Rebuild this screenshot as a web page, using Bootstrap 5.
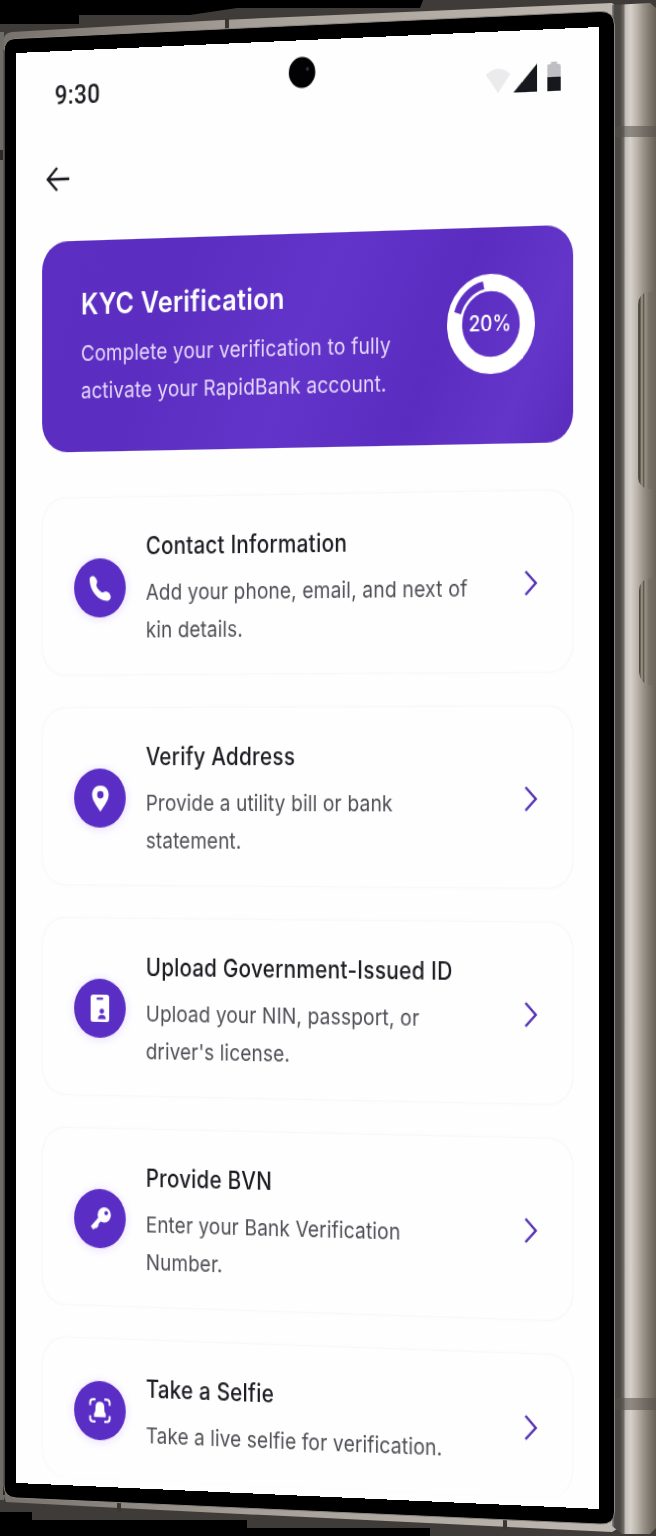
<!DOCTYPE html>
<html lang="en">
<head>
<meta charset="utf-8">
<meta name="viewport" content="width=device-width, initial-scale=1">
<title>KYC Verification</title>
<link href="https://cdn.jsdelivr.net/npm/bootstrap@5.3.0/dist/css/bootstrap.min.css" rel="stylesheet">
<style>
  :root { --brand: #5a2dc4; }
  body { background: #000; font-family: Inter, "Liberation Sans", sans-serif; }
  .stage { width: 656px; height: 1536px; }
  .phone-body { position: absolute; inset: 0; }
  /* the screen plane, turned slightly away from the viewer */
  .screen {
    width: 583px; height: 1265px; background: #fefefe; color: #1d1c22;
    position: absolute; left: 0; top: 0; transform-origin: 0 0;
    transform: matrix3d(.96393,-.04622,0,-.0000602, 0,1.1304,0,0, 0,0,1,0, 16,53,0,1);
  }
  .screen svg { display: block; flex: none; }
  .status-row { padding: 26px 37px 0 40px; height: 56px; }
  .clock { font: 500 23px/28px Roboto, sans-serif; letter-spacing: .4px; }
  .status-icons { margin-top: 2px; }
  .camera { position: absolute; left: 278px; top: 13.5px; width: 26.500px; height: 28px; }
  .app-row { height: 112px; padding: 46px 0 0 31px; }
  .hero {
    margin: 0 25px 0 27px; height: 186.4px; padding: 39px 37px 0 40px; border-radius: 26px; color: #fff;
    background: linear-gradient(115deg, #5c2fc2 0%, #5b2dc0 25%, #6334c9 50%, #5b2cc0 72%, #6335c9 88%, #5a2cbd 100%);
  }
  .hero-title { font-size: 25.5px; line-height: 34px; font-weight: 600; letter-spacing: .25px; white-space: nowrap; }
  .hero-text { font-size: 19.2px; line-height: 32.7px; margin-top: 10px; color: #e6d9fb; letter-spacing: .17px; white-space: nowrap; }
  .ring { position: relative; width: 86px; height: 86px; margin-top: 1px; }
  .ring-label { font-size: 18.5px; font-weight: 500; left: -1px; }
  .steps { margin: 40px 25px 0 27px; gap: 28.5px; }
  .step {
    border: 1.5px solid #f8f7fa; border-radius: 24px; padding: 28.7px 33px 23px 32px; gap: 20.5px;
    background: #fefefe; box-shadow: 0 0 3px rgba(120,110,150,.03);
  }
  .step-icon { width: 53px; height: 52px; margin-top: -2px; background: var(--brand); box-shadow: 0 1px 8px rgba(120,60,240,.18); }
  .step-chevron { margin-top: -2px; }
  .step-title { font-size: 20.8px; line-height: 28px; font-weight: 500; letter-spacing: .25px; white-space: nowrap; }
  .step-text { font-size: 19.2px; line-height: 32.500px; margin-top: 10.3px; margin-bottom: -.5px; color: #504e55; letter-spacing: .12px; white-space: nowrap; }
</style>
</head>
<body>
<main class="stage position-relative overflow-hidden">
  <svg class="phone-body" width="656" height="1536" viewBox="0 0 656 1536" aria-hidden="true">
    <defs>
      <linearGradient id="side" gradientUnits="userSpaceOnUse" x1="612" y1="0" x2="656" y2="0">
        <stop offset="0" stop-color="#8a8781"/><stop offset=".06" stop-color="#494845"/>
        <stop offset=".18" stop-color="#4b4945"/><stop offset=".26" stop-color="#6d6961"/>
        <stop offset=".31" stop-color="#c5c0b9"/><stop offset=".42" stop-color="#d5d0ca"/>
        <stop offset=".58" stop-color="#b8b2a9"/><stop offset=".72" stop-color="#989187"/>
        <stop offset=".86" stop-color="#7d776d"/><stop offset="1" stop-color="#686359"/>
      </linearGradient>
      <linearGradient id="strip" x1="0" y1="0" x2="1" y2="0">
        <stop offset="0" stop-color="#77716b"/><stop offset=".4" stop-color="#a69f98"/><stop offset="1" stop-color="#c0b9b1"/>
      </linearGradient>
      <linearGradient id="btn" x1="0" y1="0" x2="1" y2="0">
        <stop offset="0" stop-color="#5a554b"/><stop offset=".1" stop-color="#4a463d"/><stop offset=".22" stop-color="#a59e90"/>
        <stop offset=".3" stop-color="#5d584e"/><stop offset=".4" stop-color="#989185"/><stop offset=".6" stop-color="#777167"/><stop offset="1" stop-color="#6b665c"/>
      </linearGradient>
    </defs>
    <path fill="#3f3b38" d="M0 24H79V15H190L237 8H420L423 0H656V1536H430V1528H247V1520H32V1512H0Z"/>
    <path fill="url(#strip)" d="M4 38Q5 33 12 32L222 20L612 3L622 12V1526L612 1532L120 1508L6 1502L2 1490V50Z"/>
    <path stroke="#3a3632" stroke-width="4" d="M227 18V30M119 1500V1512M505 1518V1530"/>
    <path fill="url(#side)" d="M612 5L650 3L656 8V1528L650 1534H622L612 1526Z"/>
    <path fill="#55514a" opacity=".55" d="M614 126H656V137H614ZM614 1398H656V1410H614Z"/>
    <path fill="#6f6b66" d="M0 32H4V1500H0Z"/>
    <path fill="#2c2a28" d="M0 150H3V160H0ZM3 50H5V1495H3Z"/>
    <path fill="#000" stroke="#8b8681" stroke-width="1" d="M4 52Q4 39 15 38.5L600 11.5Q614 11 614.500 25V1512Q614 1525 600 1524L16 1498Q4 1497 4 1486Z"/>
    <path fill="url(#btn)" d="M656 292H648Q638 294 638 305V478Q639 487 648 489H656ZM656 578H650Q639 580 639 591V672Q640 683 649 685H656Z"/>
  </svg>

  <section class="screen d-flex flex-column">
    <div class="status-row d-flex justify-content-between align-items-start">
      <span class="clock">9:30</span>
      <div class="status-icons d-flex align-items-end">
        <svg width="24" height="22" viewBox="0 0 24 23" preserveAspectRatio="none"><path fill="#ebebee" d="M0 6Q12-4 24 6L12 23Z"/></svg>
        <svg width="23" height="24" viewBox="0 0 23 24" style="margin-left:3.4px"><path fill="#17181d" d="M23 0V24H0Z"/></svg>
        <svg width="13" height="25" viewBox="0 0 13 25" style="margin-left:9.8px"><path fill="#bfbfc3" d="M0 3Q0 2 2 2H3.500V0H9.500V2H11Q13 2 13 4V14H0Z"/><path fill="#17181d" d="M0 13H13V25H0Z"/></svg>
      </div>
    </div>
    <svg class="camera" viewBox="0 0 27 28"><ellipse cx="13.500" cy="14" rx="13.500" ry="13.700" fill="#020204"/><circle cx="19" cy="11" r="1.600" fill="#33343a"/></svg>
    <div class="app-row">
      <svg width="24" height="22" viewBox="0 0 24 22" fill="none" stroke="#1d1c22" stroke-width="2.300"><path d="M11.500 1L1.800 11L11.500 21M1.800 11H24"/></svg>
    </div>

    <div class="hero d-flex justify-content-between">
      <div>
        <div class="hero-title">KYC Verification</div>
        <div class="hero-text">Complete your verification to fully<br>activate your RapidBank account.</div>
      </div>
      <div class="ring d-flex align-items-center justify-content-center">
        <svg class="position-absolute top-0 start-0" width="86" height="86" viewBox="0 0 87 87" fill="none">
          <circle cx="43.500" cy="43.500" r="36" stroke="#fff" stroke-width="15"/>
          <path d="M10.500 33.400A34.500 34.500 0 0 1 36.300 9.800" stroke="#5d30c2" stroke-width="7"/>
        </svg>
        <span class="ring-label position-relative">20%</span>
      </div>
    </div>

    <div class="steps d-flex flex-column">
      <div class="step d-flex align-items-center">
        <div class="step-icon rounded-circle d-flex align-items-center justify-content-center">
          <svg width="23" height="23" viewBox="0 0 24 24"><path fill="#fff" d="M1 3.500C1 1.500 3.500-.3 5.500.8C7.500 2 9.500 4.500 9 6.500C8.700 7.700 8 8.300 8.300 9.500C9.200 12 11.800 14.600 14.200 15.600C15.500 16.100 16.300 14.900 17.800 14.800C20 14.700 23 16.700 23.500 19C24 21.500 22 23.500 19.500 23.500C10 23.500 1 13.500 1 3.500Z"/></svg>
        </div>
        <div class="flex-grow-1">
          <div class="step-title">Contact Information</div>
          <div class="step-text">Add your phone, email, and next of<br>kin details.</div>
        </div>
        <svg class="step-chevron" width="14" height="22" viewBox="0 0 14 23" fill="none" stroke="#5631b5" stroke-width="2.300"><path d="M1.500 1L12 11.500L1.500 22"/></svg>
      </div>

      <div class="step d-flex align-items-center">
        <div class="step-icon rounded-circle d-flex align-items-center justify-content-center">
          <svg width="18" height="23" viewBox="0 0 18 23"><path fill="#fff" fill-rule="evenodd" d="M9 0C3.900 0 .5 3.500.5 8C.5 13 5 17.500 9 23C13 17.500 17.500 13 17.500 8C17.500 3.500 14.100 0 9 0ZM9 4.800A3.300 3.300 0 1 1 9 11.400A3.300 3.300 0 0 1 9 4.800Z"/></svg>
        </div>
        <div class="flex-grow-1">
          <div class="step-title">Verify Address</div>
          <div class="step-text">Provide a utility bill or bank<br>statement.</div>
        </div>
        <svg class="step-chevron" width="14" height="22" viewBox="0 0 14 23" fill="none" stroke="#5631b5" stroke-width="2.300"><path d="M1.500 1L12 11.500L1.500 22"/></svg>
      </div>

      <div class="step d-flex align-items-center">
        <div class="step-icon rounded-circle d-flex align-items-center justify-content-center">
          <svg width="19" height="24" viewBox="0 0 19 24"><rect width="19" height="24" rx="2.500" fill="#fff"/><g fill="#5d2fc6"><rect x="6" y="2.500" width="7" height="2" rx="1"/><circle cx="11.500" cy="14.500" r="2.300"/><path d="M7.500 21.500Q7.500 17.800 11.500 17.800T15.500 21.500Z"/></g></svg>
        </div>
        <div class="flex-grow-1">
          <div class="step-title">Upload Government-Issued ID</div>
          <div class="step-text">Upload your NIN, passport, or<br>driver's license.</div>
        </div>
        <svg class="step-chevron" width="14" height="22" viewBox="0 0 14 23" fill="none" stroke="#5631b5" stroke-width="2.300"><path d="M1.500 1L12 11.500L1.500 22"/></svg>
      </div>

      <div class="step d-flex align-items-center">
        <div class="step-icon rounded-circle d-flex align-items-center justify-content-center">
          <svg width="22" height="21" viewBox="0 0 22 21"><path d="M12 9L2.500 18.500M6 15.500L8 17.500" stroke="#fff" stroke-width="4"/><path fill="#fff" fill-rule="evenodd" d="M15 0A6.800 6.800 0 1 1 15 13.600A6.800 6.800 0 0 1 15 0ZM17 3.200A1.900 1.900 0 1 0 17 7A1.900 1.900 0 0 0 17 3.200Z"/></svg>
        </div>
        <div class="flex-grow-1">
          <div class="step-title">Provide BVN</div>
          <div class="step-text">Enter your Bank Verification<br>Number.</div>
        </div>
        <svg class="step-chevron" width="14" height="22" viewBox="0 0 14 23" fill="none" stroke="#5631b5" stroke-width="2.300"><path d="M1.500 1L12 11.500L1.500 22"/></svg>
      </div>

      <div class="step d-flex align-items-center border-bottom-0">
        <div class="step-icon rounded-circle d-flex align-items-center justify-content-center">
          <svg width="23" height="22" viewBox="0 0 23 22"><path fill="none" stroke="#fff" stroke-width="2" d="M1.500 6.500V4Q1.500 1.200 4.500 1.200H7M16 1.200H18.500Q21.500 1.200 21.500 4V6.500M21.500 15.500V18Q21.500 20.800 18.500 20.800H16M7 20.800H4.500Q1.500 20.800 1.500 18V15.500"/><path fill="#fff" d="M11.500 3.300C14.600 3.300 16 5.300 16 8C16 11.500 16.300 12.500 17.500 13.800V16.700H5.500V13.800C6.700 12.500 7 11.500 7 8C7 5.300 8.400 3.300 11.500 3.300Z"/></svg>
        </div>
        <div class="flex-grow-1">
          <div class="step-title">Take a Selfie</div>
          <div class="step-text">Take a live selfie for verification.</div>
        </div>
        <svg class="step-chevron" width="14" height="22" viewBox="0 0 14 23" fill="none" stroke="#5631b5" stroke-width="2.300"><path d="M1.500 1L12 11.500L1.500 22"/></svg>
      </div>
    </div>
  </section>
</main>
<script src="https://cdn.jsdelivr.net/npm/bootstrap@5.3.0/dist/js/bootstrap.bundle.min.js"></script>
</body>
</html>
